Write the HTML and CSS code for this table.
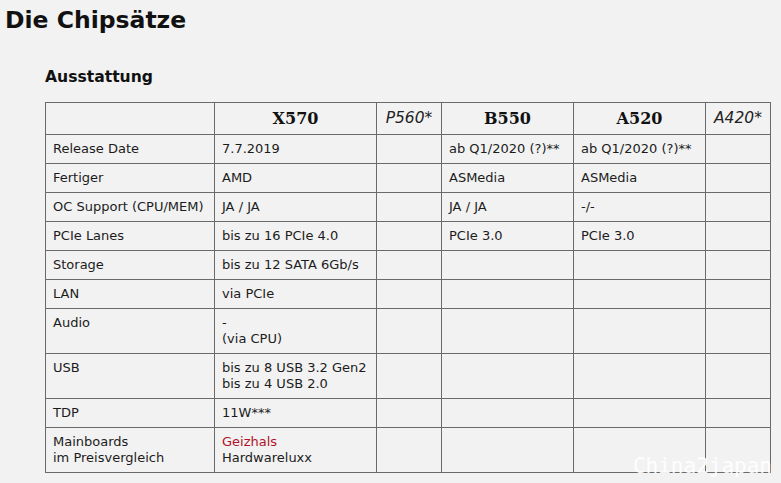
FILE: index.html
```html
<!DOCTYPE html>
<html lang="de">
<head>
<meta charset="utf-8">
<title>Die Chipsätze</title>
<link rel="stylesheet" href="styles.css">
</head>
<body>
<h1 class="title">Die Chipsätze</h1>
<section class="section">
  <h2 class="subtitle">Ausstattung</h2>
  <table class="chips">
    <colgroup>
      <col class="c1"><col class="c2"><col class="c3"><col class="c4"><col class="c5"><col class="c6">
    </colgroup>
    <thead>
      <tr>
        <th></th>
        <th class="main">X570</th>
        <th class="alt">P560*</th>
        <th class="main">B550</th>
        <th class="main">A520</th>
        <th class="alt">A420*</th>
      </tr>
    </thead>
    <tbody>
      <tr><td>Release Date</td><td>7.7.2019</td><td></td><td>ab Q1/2020 (?)**</td><td>ab Q1/2020 (?)**</td><td></td></tr>
      <tr><td>Fertiger</td><td>AMD</td><td></td><td>ASMedia</td><td>ASMedia</td><td></td></tr>
      <tr><td>OC Support (CPU/MEM)</td><td>JA / JA</td><td></td><td>JA / JA</td><td>-/-</td><td></td></tr>
      <tr><td>PCIe Lanes</td><td>bis zu 16 PCIe 4.0</td><td></td><td>PCIe 3.0</td><td>PCIe 3.0</td><td></td></tr>
      <tr><td>Storage</td><td>bis zu 12 SATA 6Gb/s</td><td></td><td></td><td></td><td></td></tr>
      <tr><td>LAN</td><td>via PCIe</td><td></td><td></td><td></td><td></td></tr>
      <tr><td>Audio</td><td>-<br>(via CPU)</td><td></td><td></td><td></td><td></td></tr>
      <tr><td>USB</td><td>bis zu 8 USB 3.2 Gen2<br>bis zu 4 USB 2.0</td><td></td><td></td><td></td><td></td></tr>
      <tr><td>TDP</td><td>11W***</td><td></td><td></td><td></td><td></td></tr>
      <tr><td>Mainboards<br>im Preisvergleich</td><td><a class="link" href="#">Geizhals</a><br>Hardwareluxx</td><td></td><td></td><td></td><td></td></tr>
    </tbody>
  </table>
</section>
<div class="watermark">China2japan</div>
</body>
</html>
```
FILE: styles.css
```css
html, body {
  margin: 0;
  padding: 0;
  background: #f2f2f2;
}
body {
  font-family: "DejaVu Sans", Verdana, sans-serif;
  color: #1c1c1c;
  padding: 0 0 0 5px;
  height: 483px;
  overflow: hidden;
  position: relative;
}
.title {
  margin: 0;
  padding-top: 5px;
  font-size: 23.5px;
  line-height: 30px;
  font-weight: bold;
  color: #111;
}
.section {
  padding-left: 40px;
}
.subtitle {
  margin: 0;
  padding-top: 32px;
  font-size: 15.6px;
  line-height: 20px;
  font-weight: bold;
  color: #111;
  padding-bottom: 15px;
}
.chips {
  border-collapse: collapse;
  table-layout: fixed;
  width: 725px;
  font-size: 13px;
  line-height: 16px;
}
.c1 { width: 169px; }
.c2 { width: 162px; }
.c3 { width: 65px; }
.c4 { width: 132px; }
.c5 { width: 132px; }
.c6 { width: 65px; }
.chips th, .chips td {
  border: 1px solid #6a6a6a;
  padding: 6px 7px;
  vertical-align: top;
  text-align: left;
  white-space: nowrap;
}
.chips th {
  height: 19px;
  line-height: 19px;
  padding-top: 6px;
  padding-bottom: 6px;
  text-align: center;
}
.chips th.main {
  font-family: "DejaVu Serif", Georgia, serif;
  font-weight: bold;
  font-size: 16px;
  color: #111;
}
.chips th.alt {
  font-family: "DejaVu Sans", Verdana, sans-serif;
  font-style: italic;
  font-weight: normal;
  font-size: 15.5px;
  color: #222;
}
.link {
  color: #b0132b;
  text-decoration: none;
}
.watermark {
  position: absolute;
  right: 9px;
  bottom: 6px;
  font-family: "DejaVu Sans Mono", monospace;
  font-size: 21px;
  line-height: 22px;
  color: rgba(255, 255, 255, 0.92);
  letter-spacing: 0;
}
```
